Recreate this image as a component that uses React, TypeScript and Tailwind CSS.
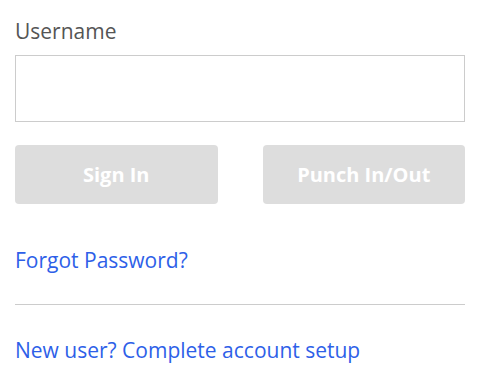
import React from 'react';

export default function App() {
  return (
    <div className="min-h-screen bg-white px-[15px] pt-[16px] font-['Open_Sans',sans-serif] w-[480px]">
      <label className="block text-[21px] leading-[30px] text-[#555555]">Username</label>
      <input
        type="text"
        className="mt-[9px] block h-[67px] w-[450px] border border-[#cccccc] bg-white px-3 outline-none"
      />
      <div className="mt-[23px] grid w-[450px] grid-cols-2 gap-[45px]">
        <button className="h-[59px] rounded-[4px] bg-[#dddddd] text-[20px] font-bold text-white">Sign In</button>
        <button className="h-[59px] rounded-[4px] bg-[#dddddd] text-[20px] font-bold text-white">Punch In/Out</button>
      </div>
      <a href="#" className="mt-[41px] block text-[21px] leading-[30px] text-[#2e5fe8]">Forgot Password?</a>
      <hr className="mt-[29px] w-[450px] border-t border-[#cccccc]" />
      <a href="#" className="mt-[30px] block text-[21px] leading-[30px] text-[#2e5fe8]">New user? Complete account setup</a>
    </div>
  );
}
